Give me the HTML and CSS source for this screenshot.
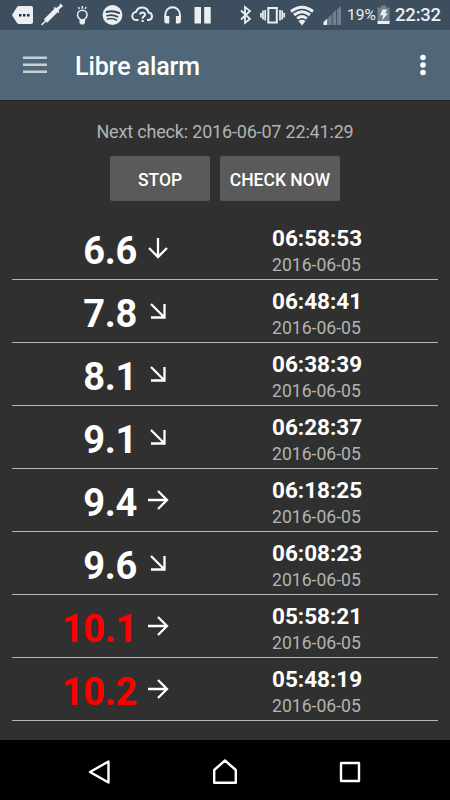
FILE: index.html
```html
<!DOCTYPE html>
<html lang="en">
  <head>
    <meta charset="utf-8" />
    <meta name="viewport" content="width=device-width, initial-scale=1" />
    <title>Libre alarm</title>
    <link rel="stylesheet" href="styles.css">
  </head>
  <body>
    <div class="status-bar">
      <div class="notifications">
        <svg width="30" height="30" viewBox="0 0 30 30">
          <path d="M4 15l5-8q1-1 2-1h12q2 0 2 2v14q0 2-2 2H11q-1 0-2-1z" fill="#eceff1" />
          <path d="M11 14h2.500v2.500H11zM15 14h2.500v2.500H15zM19 14h2.500v2.500H19z" fill="#1d3447" />
        </svg>
        <svg width="30" height="30" viewBox="0 0 30 30" fill="none" stroke="#eceff1">
          <path d="M3.500 25l4.500-4.500" stroke-width="1.600" />
          <path d="M7.500 21L19.500 9" stroke-width="4.600" />
          <path d="M18.500 10l5-4.500" stroke-width="3" />
          <path d="M16 7.500l5 5M22 4l2.500 2.500" stroke-width="1.500" />
        </svg>
        <svg width="30" height="30" viewBox="0 0 30 30" fill="none" stroke="#eceff1" stroke-width="1.500">
          <path d="M12.500 19.500q-3-2-3-4.500a4.800 4.800 0 0 1 9.600 0q0 2.500-3 4.500M14.300 6v2.800M10.500 7l1 2M18 7l-1 2" />
          <path d="M11.500 19h5.500v4l-1.500 1.500h-2.500L11.500 23z" fill="#eceff1" stroke="none" />
        </svg>
        <svg width="30" height="30" viewBox="0 0 30 30" fill="none" stroke="#334a5c" stroke-linecap="round">
          <circle cx="14.500" cy="15" r="9.900" fill="#eceff1" stroke="none" />
          <path d="M8.500 12q6.500-2 12.500 1" stroke-width="2" />
          <path d="M9 15.700q6-1.500 10.500 1.100" stroke-width="1.700" />
          <path d="M9.500 19q5-1.200 9 1" stroke-width="1.500" />
        </svg>
        <svg width="30" height="30" viewBox="0 0 30 30" fill="none" stroke="#eceff1" stroke-width="2">
          <path d="M10.500 20H8.500a4 4 0 0 1-.5-8 6.500 6.500 0 0 1 12.500.5 3.800 3.800 0 0 1 .5 7.500h-2" />
          <path d="M12 14.500q.2-2 2.500-2t2.500 2q0 1.200-1.500 2.200-1 .6-1 2" />
          <path d="M13.500 20h2.200v2h-2.200z" fill="#eceff1" stroke="none" />
        </svg>
        <svg width="30" height="30" viewBox="0 0 30 30" fill="none" stroke="#eceff1" stroke-width="2">
          <path d="M7.300 17v-2.500a7.300 7.300 0 0 1 14.600 0V17" />
          <path d="M6.300 16h5v7.500H8.500q-2.200 0-2.200-2.200zM17.900 16h5v5.300q0 2.200-2.200 2.200h-2.800z" fill="#eceff1" stroke="none" />
        </svg>
        <svg width="30" height="30" viewBox="0 0 30 30">
          <path d="M6.500 7H13v16.500H6.500zM16.200 7h6.500v16.500h-6.500z" fill="#eceff1" />
        </svg>
      </div>
      <div class="system">
        <svg width="24" height="30" viewBox="0 0 24 30" fill="none" stroke="#eceff1" stroke-width="1.800">
          <path d="M7 10.500l9 8.500-5 4V7l5 4-9 8.500" />
        </svg>
        <svg width="30" height="30" viewBox="0 0 30 30" fill="none" stroke="#eceff1" stroke-width="2">
          <path d="M10.300 8h8.500v14.500h-8.500z" />
          <path d="M7.200 10v10.500M5 10.500v9M3 13v4.500M22 10v10.500M24.200 10.500v9M26.200 13v4.500" stroke-width="1.700" />
        </svg>
        <svg width="30" height="30" viewBox="0 0 30 30" fill="none" stroke="#eceff1" stroke-width="2.900">
          <path d="M3 11.500q11-8.500 22 0M6 15q8-6.500 16 0M9.200 18.500q4.800-4 9.600 0" />
          <path d="M10.500 21q3.500-2.500 7 0L14 25.500z" fill="#eceff1" stroke="none" />
        </svg>
        <svg width="27" height="30" viewBox="0 0 27 30">
          <path d="M5.500 25v-3l3.800-3.500V25z" fill="#eceff1" />
          <path d="M10.200 25v-7.500l3.500-3.300V25zM14.700 25V13.200l3.500-3.200v15zM19.200 25V9.500L23 6v19z" fill="#71808c" />
        </svg>
        <span class="percent">19%</span>
        <svg width="18" height="30" viewBox="0 0 18 30">
          <path d="M2.500 8.500q0-1 1-1H6V5.500h5v2h2.500q1 0 1 1V22h-12z" fill="#71808c" />
          <path d="M2.500 21h12v3h-12zM7.500 9.500h4.500l-1.800 4h2.600L7 20.500l1.200-5.200H5z" fill="#eceff1" />
        </svg>
        <span class="clock">22:32</span>
      </div>
    </div>

    <div class="toolbar">
      <svg class="menu" width="24" height="18" viewBox="0 0 24 18">
        <path d="M0 .5h24V3H0zM0 7.500h24V10H0zM0 14.500h24V17H0z" fill="#c7cfd5" />
      </svg>
      <h1>Libre alarm</h1>
      <svg class="more" width="6" height="22" viewBox="0 0 6 22" fill="#fff">
        <circle cx="3" cy="3.500" r="2.800" />
        <circle cx="3" cy="11" r="2.800" />
        <circle cx="3" cy="18.500" r="2.800" />
      </svg>
    </div>

    <main>
      <p class="next-check">Next check: 2016-06-07 22:41:29</p>
      <div class="actions">
        <button class="stop">STOP</button>
        <button class="check">CHECK NOW</button>
      </div>
      <ul class="readings">
        <li>
          <span class="value">6.6</span>
          <svg class="arrow down" viewBox="0 0 22 22"><path d="M1 11h18M11 2l9 9-9 9" /></svg>
          <div class="when"><b>06:58:53</b><span>2016-06-05</span></div>
        </li>
        <li>
          <span class="value">7.8</span>
          <svg class="arrow" viewBox="0 0 22 22"><path d="M4 4l13 13M4 17.500h13.500V4" /></svg>
          <div class="when"><b>06:48:41</b><span>2016-06-05</span></div>
        </li>
        <li>
          <span class="value">8.1</span>
          <svg class="arrow" viewBox="0 0 22 22"><path d="M4 4l13 13M4 17.500h13.500V4" /></svg>
          <div class="when"><b>06:38:39</b><span>2016-06-05</span></div>
        </li>
        <li>
          <span class="value">9.1</span>
          <svg class="arrow" viewBox="0 0 22 22"><path d="M4 4l13 13M4 17.500h13.500V4" /></svg>
          <div class="when"><b>06:28:37</b><span>2016-06-05</span></div>
        </li>
        <li>
          <span class="value">9.4</span>
          <svg class="arrow" viewBox="0 0 22 22"><path d="M1 11h18M11 2l9 9-9 9" /></svg>
          <div class="when"><b>06:18:25</b><span>2016-06-05</span></div>
        </li>
        <li>
          <span class="value">9.6</span>
          <svg class="arrow" viewBox="0 0 22 22"><path d="M4 4l13 13M4 17.500h13.500V4" /></svg>
          <div class="when"><b>06:08:23</b><span>2016-06-05</span></div>
        </li>
        <li>
          <span class="value high">10.1</span>
          <svg class="arrow" viewBox="0 0 22 22"><path d="M1 11h18M11 2l9 9-9 9" /></svg>
          <div class="when"><b>05:58:21</b><span>2016-06-05</span></div>
        </li>
        <li>
          <span class="value high">10.2</span>
          <svg class="arrow" viewBox="0 0 22 22"><path d="M1 11h18M11 2l9 9-9 9" /></svg>
          <div class="when"><b>05:48:19</b><span>2016-06-05</span></div>
        </li>
      </ul>
    </main>

    <div class="nav-bar">
      <svg width="26" height="28" viewBox="0 0 26 28"><path d="M21.500 3.500v21L3 14z" /></svg>
      <svg width="26" height="28" viewBox="0 0 26 28"><path d="M2.200 24.800V12L13 2.500 23.800 12v12.800z" /></svg>
      <svg width="26" height="28" viewBox="0 0 26 28"><path d="M4 5h18v18H4z" /></svg>
    </div>
  </body>
</html>
```

FILE: styles.css
```css
* {
  box-sizing: border-box;
}

body {
  margin: 0;
  width: 450px;
  height: 800px;
  display: flex;
  flex-direction: column;
  overflow: hidden;
  background: #303030;
  color: #fff;
  font-family: Roboto, "Liberation Sans", sans-serif;
}

svg {
  display: block;
  flex: none;
}

.status-bar {
  height: 30px;
  padding: 0 10px 0 8px;
  display: flex;
  justify-content: space-between;
  background: #3d4f5f;
  color: #eceff1;
}

.notifications,
.system {
  display: flex;
  align-items: center;
}

.percent {
  width: 30px;
  padding-left: 2px;
  font-size: 15.5px;
  line-height: 31px;
}

.clock {
  width: 47px;
  padding-left: 2px;
  font-size: 18.5px;
  letter-spacing: -0.2px;
  font-weight: 500;
  line-height: 30px;
}

.toolbar {
  height: 70px;
  padding: 0 24.5px 0 23px;
  display: flex;
  align-items: center;
  background: #50677a;
  box-shadow: 0 1px 0 #27221f;
}

.toolbar h1 {
  flex: 1;
  margin: 2px 0 0 28px;
  font-size: 25px;
  font-weight: 500;
  letter-spacing: -0.1px;
}

main {
  flex: 1;
  padding: 0 12px;
}

.next-check {
  margin: 20px 0 13px;
  font-size: 18px;
  line-height: 23px;
  letter-spacing: -0.18px;
  text-align: center;
  color: #b3b3b3;
}

.actions {
  display: flex;
  justify-content: center;
  gap: 10px;
}

button {
  height: 45px;
  padding: 2px 0 0;
  border: 0;
  border-radius: 2px;
  background: #5a5a5b;
  color: #fff;
  font: 500 17.5px Roboto, "Liberation Sans", sans-serif;
}

.stop {
  width: 100px;
}

.check {
  width: 120px;
}

.readings {
  margin: 16px 0 0;
  padding: 0;
  list-style: none;
}

.readings li {
  height: 63px;
  display: flex;
  border-bottom: 1px solid #b5b5b5;
}

.value {
  width: 125px;
  padding-top: 12px;
  font-size: 38px;
  font-weight: 700;
  line-height: 44px;
  letter-spacing: -0.3px;
  text-align: right;
}

.high {
  color: #f00;
}

.arrow {
  width: 22px;
  height: 22px;
  margin: 20px 103px 0 10px;
  fill: none;
  stroke: #fff;
  stroke-width: 2.3;
}

.down {
  transform: rotate(90deg);
}

.when b,
.when span {
  display: block;
}

.when b {
  padding-top: 7px;
  font-size: 22.5px;
  line-height: 28px;
}

.when span {
  font-size: 17.6px;
  line-height: 27px;
  color: #b3b3b3;
}

.nav-bar {
  height: 60px;
  padding: 4px 87px 0;
  display: flex;
  align-items: center;
  justify-content: space-between;
  background: #000;
}

.nav-bar path {
  fill: none;
  stroke: #fff;
  stroke-width: 2.4;
  stroke-linejoin: round;
}
```
